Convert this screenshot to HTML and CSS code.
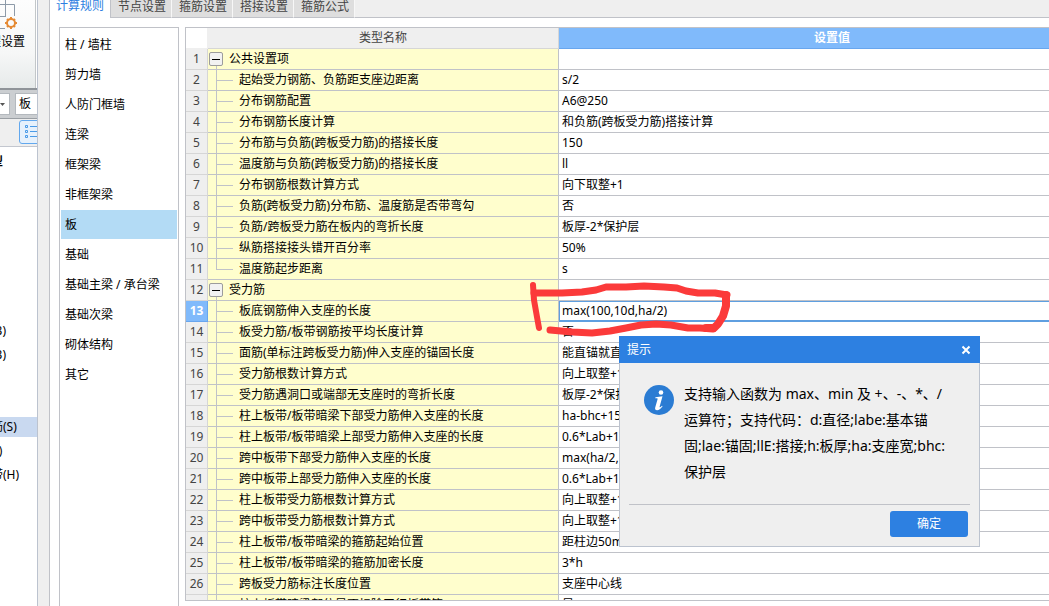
FILE: index.html
```html
<!DOCTYPE html>
<html lang="zh-CN">
<head>
<meta charset="utf-8">
<title>计算设置</title>
<link rel="stylesheet" href="styles.css">
</head>
<body>
<div class="app">
  <aside class="host">
    <div class="ribbon">
      <svg class="ribbon-icon" width="18" height="32" viewBox="0 0 18 32" fill="none" aria-hidden="true">
        <path d="M0 4.500H14.500V16M5.500 0V17M0 16.500H6M0 28.500H5" stroke="#8d9aa8"/>
        <circle cx="11" cy="23" r="4" stroke="#e58a33" stroke-width="2"/>
        <path d="M11 17v2M11 27v2M5 23h2M15 23h2M7 19l1.500 1.500M15 19l-1.500 1.500M7 27l1.500-1.500M15 27l-1.500-1.500" stroke="#e58a33" stroke-width="2"/>
      </svg>
      <button class="ribbon-label">工程设置</button>
    </div>
    <div class="combos">
      <button class="combo-arrow" aria-label="展开"><svg width="5" height="3" viewBox="0 0 5 3" aria-hidden="true"><path d="M0 0h5L2.500 3z" fill="#555"/></svg></button>
      <button class="combo">板</button>
    </div>
    <div class="tools">
      <button class="tool" aria-label="列表">
        <svg width="24" height="16" viewBox="0 0 24 16" fill="none" stroke="#4a9be8" aria-hidden="true">
          <path d="M.5 1.500h2v2h-2zM.5 6.500h2v2h-2zM.5 11.500h2v2h-2zM5 2.500h16M5 7.500h16M5 12.500h16"/>
        </svg>
      </button>
    </div>
    <ul class="tree">
      <li class="tree-title">构件类型</li>
      <li class="tree-gap"></li>
      <li>现浇板(B)</li>
      <li>螺旋板(B)</li>
      <li class="tree-space"></li>
      <li class="is-selected">板受力筋(S)</li>
      <li>板负筋(I)</li>
      <li>楼层板带(H)</li>
    </ul>
  </aside>
  <div class="gutter"></div>
  <main class="dialog">
    <nav class="tabs">
      <button class="tab is-active">计算规则</button>
      <button class="tab">节点设置</button>
      <button class="tab">箍筋设置</button>
      <button class="tab">搭接设置</button>
      <button class="tab">箍筋公式</button>
      <span class="tabs-rest"></span>
    </nav>
    <div class="content">
      <ul class="kinds">
        <li>柱 / 墙柱</li>
        <li>剪力墙</li>
        <li>人防门框墙</li>
        <li>连梁</li>
        <li>框架梁</li>
        <li>非框架梁</li>
        <li class="is-selected">板</li>
        <li>基础</li>
        <li>基础主梁 / 承台梁</li>
        <li>基础次梁</li>
        <li>砌体结构</li>
        <li>其它</li>
      </ul>
      <div class="sheet">
        <table class="grid">
          <colgroup><col class="col-no"><col class="col-name"><col></colgroup>
          <thead><tr><th class="corner"></th><th>类型名称</th><th class="is-current">设置值</th></tr></thead>
          <tbody>
            <tr><th>1</th><td class="group"><button class="toggle" aria-label="折叠"></button>公共设置项</td><td></td></tr>
            <tr><th>2</th><td class="item">起始受力钢筋、负筋距支座边距离</td><td>s/2</td></tr>
            <tr><th>3</th><td class="item">分布钢筋配置</td><td>A6@250</td></tr>
            <tr><th>4</th><td class="item">分布钢筋长度计算</td><td>和负筋(跨板受力筋)搭接计算</td></tr>
            <tr><th>5</th><td class="item">分布筋与负筋(跨板受力筋)的搭接长度</td><td>150</td></tr>
            <tr><th>6</th><td class="item">温度筋与负筋(跨板受力筋)的搭接长度</td><td>ll</td></tr>
            <tr><th>7</th><td class="item">分布钢筋根数计算方式</td><td>向下取整+1</td></tr>
            <tr><th>8</th><td class="item">负筋(跨板受力筋)分布筋、温度筋是否带弯勾</td><td>否</td></tr>
            <tr><th>9</th><td class="item">负筋/跨板受力筋在板内的弯折长度</td><td>板厚-2*保护层</td></tr>
            <tr><th>10</th><td class="item">纵筋搭接接头错开百分率</td><td>50%</td></tr>
            <tr><th>11</th><td class="item is-last">温度筋起步距离</td><td>s</td></tr>
            <tr><th>12</th><td class="group"><button class="toggle" aria-label="折叠"></button>受力筋</td><td></td></tr>
            <tr><th class="is-current">13</th><td class="item">板底钢筋伸入支座的长度</td><td class="editing"><input class="editor" aria-label="板底钢筋伸入支座的长度" value="max(100,10d,ha/2)"></td></tr>
            <tr><th>14</th><td class="item">板受力筋/板带钢筋按平均长度计算</td><td>否</td></tr>
            <tr><th>15</th><td class="item">面筋(单标注跨板受力筋)伸入支座的锚固长度</td><td>能直锚就直锚</td></tr>
            <tr><th>16</th><td class="item">受力筋根数计算方式</td><td>向上取整+1</td></tr>
            <tr><th>17</th><td class="item">受力筋遇洞口或端部无支座时的弯折长度</td><td>板厚-2*保护层</td></tr>
            <tr><th>18</th><td class="item">柱上板带/板带暗梁下部受力筋伸入支座的长度</td><td>ha-bhc+15*d</td></tr>
            <tr><th>19</th><td class="item">柱上板带/板带暗梁上部受力筋伸入支座的长度</td><td>0.6*Lab+15*d</td></tr>
            <tr><th>20</th><td class="item">跨中板带下部受力筋伸入支座的长度</td><td>max(ha/2,12*d)</td></tr>
            <tr><th>21</th><td class="item">跨中板带上部受力筋伸入支座的长度</td><td>0.6*Lab+15*d</td></tr>
            <tr><th>22</th><td class="item">柱上板带受力筋根数计算方式</td><td>向上取整+1</td></tr>
            <tr><th>23</th><td class="item">跨中板带受力筋根数计算方式</td><td>向上取整+1</td></tr>
            <tr><th>24</th><td class="item">柱上板带/板带暗梁的箍筋起始位置</td><td>距柱边50mm</td></tr>
            <tr><th>25</th><td class="item">柱上板带/板带暗梁的箍筋加密长度</td><td>3*h</td></tr>
            <tr><th>26</th><td class="item">跨板受力筋标注长度位置</td><td>支座中心线</td></tr>
            <tr><th></th><td class="item">柱上板带暗梁部位是否扣除平行板带筋</td><td>是</td></tr>
          </tbody>
        </table>
      </div>
    </div>
  </main>
</div>

<svg class="marker" width="206" height="60" viewBox="0 0 206 60" fill="none" stroke="#fb3a3a" stroke-linecap="round" stroke-linejoin="round" aria-hidden="true">
  <path stroke-width="6" d="M5 7L6 22 9 39 11 50"/>
  <path stroke-width="7" d="M6 15L34 15 54 14 68 12 78 9 98 9 116 8 136 9 149 10 158 13 170 15 187 15 199 17"/>
  <path stroke-width="8" d="M198 17L198 28 195 38 190 46 186 50 178 50"/>
  <path stroke-width="7" d="M185 51L172 50 160 50 143 47 128 46 113 47 98 50 82 53 64 55 44 54 22 52"/>
</svg>

<section class="prompt" role="dialog" aria-labelledby="prompt-title">
  <header class="prompt-head">
    <span id="prompt-title">提示</span>
    <button class="prompt-close" aria-label="关闭">
      <svg width="10" height="10" viewBox="0 0 10 10" stroke="#fff" stroke-width="2" aria-hidden="true"><path d="M1.500 1.500l7 7M8.500 1.500l-7 7"/></svg>
    </button>
  </header>
  <div class="prompt-body">
    <svg class="prompt-icon" width="30" height="30" viewBox="0 0 30 30" aria-hidden="true">
      <circle cx="15" cy="15" r="15" fill="#2b7cd3"/>
      <circle cx="17" cy="7.500" r="2.300" fill="#fff"/>
      <path fill="#fff" d="M11.500 12.200l7-.9-2.900 10.400c-.2.900.4 1 2.400-1l.6.6c-2 2.800-3.800 3.900-5.500 3.900-1.700 0-2.300-1-1.900-2.700l2.300-8c.2-.8 0-1.200-.8-1.200h-1.500z"/>
    </svg>
    <p class="prompt-text">支持输入函数为 max、min 及 +、-、*、/<br>运算符；支持代码：d:直径;labe:基本锚<br>固;lae:锚固;llE:搭接;h:板厚;ha:支座宽;bhc:<br>保护层</p>
  </div>
  <footer class="prompt-foot"><button class="prompt-ok">确定</button></footer>
</section>
</body>
</html>
```
FILE: styles.css
```css
* { box-sizing: border-box; }

html, body { height: 100%; }

body {
  margin: 0;
  overflow: hidden;
  background: #fff;
  color: #000;
  font: 12px/20px "Noto Sans", "Noto Sans CJK SC", sans-serif;
}

button, input { font: inherit; color: inherit; border: 0; padding: 0; margin: 0; background: none; }
ul { list-style: none; margin: 0; padding: 0; }

.app { display: flex; height: 100%; overflow: hidden; }

/* Host window, visible behind the dialog */
.host { flex: 0 0 38px; overflow: hidden; border-right: 1px solid #bcc3cf; }
.ribbon {
  height: 88px;
  margin-right: 1px;
  background: linear-gradient(#fdfdfd, #f6f7f7 60%, #e6eaea);
  border-right: 1px solid #c3c7c9;
}
.ribbon-icon { display: block; }
.ribbon-label { display: block; margin-left: -23px; white-space: nowrap; }
.combos {
  display: flex;
  gap: 5px;
  height: 31px;
  padding: 3px 0;
  background: #cbced1;
  border-top: 2px solid #8f9499;
  border-bottom: 1px solid #9a9fa4;
}
.combo-arrow { flex: 0 0 10px; display: flex; align-items: center; background: #fff; border: 1px solid #b4b9be; border-left: 0; }
.combo { flex: 1; padding-left: 3px; text-align: left; background: #fff; border: 1px solid #b4b9be; border-right: 0; }
.tools { height: 28px; padding: 1px 0 2px 19px; background: #efefef; border-bottom: 1px solid #c3c7cf; }
.tool { display: flex; align-items: center; width: 32px; height: 24px; padding-left: 5px; background: #e6f1fc; border: 1px solid #62a8ee; border-radius: 3px; }
.tree { padding-top: 5px; }
.tree li { height: 20px; margin-bottom: 4px; text-indent: -45px; white-space: nowrap; }
.tree .tree-title { font-weight: bold; }
.tree .tree-gap { height: 141px; }
.tree .tree-space { height: 44px; }
.tree .is-selected { background: #c9d9f0; }

.gutter { flex: 0 0 12px; background: #efefef; border-right: 1px solid #c0c2c8; }

/* Settings dialog */
.dialog { flex: 1; min-width: 0; display: flex; flex-direction: column; }
.tabs { display: flex; height: 18px; color: #444; }
.tab { flex: 0 0 61px; line-height: 14px; padding: 0 0 3px 2px; background: #dedede; border-right: 1px solid #f7f7f7; border-bottom: 1px solid #c0c2c8; }
.tab.is-active { color: #2d80e1; line-height: 12px; padding: 0 0 6px; background: #fff; border-right-color: #c0c2c8; border-bottom: 0; }
.tabs-rest { flex: 1; background: #efefef; border-bottom: 1px solid #c0c2c8; }

.content { flex: 1; min-height: 0; display: flex; gap: 6px; padding: 9px 0 0 9px; }
.kinds { flex: 0 0 120px; padding: 2px 1px; border: 1px solid #c0c2c8; border-bottom: 0; }
.kinds li { height: 29px; margin-bottom: 1px; padding-left: 4px; line-height: 30px; white-space: nowrap; }
.kinds .is-selected { background: #b3dbf5; }

.sheet { flex: 1; min-width: 0; margin: 0 -58px 5px 0; overflow: hidden; border: 1px solid #c0c2c8; }
.grid { width: 100%; table-layout: fixed; border-collapse: separate; border-spacing: 0; }
.col-no { width: 22px; }
.col-name { width: 351px; }
.grid th, .grid td { height: 21px; padding: 0; line-height: 20px; white-space: nowrap; border-right: 1px solid #c0c2c8; border-bottom: 1px solid #c0c2c8; }
.grid td { padding-left: 3px; }
.grid th { font-weight: normal; color: #444; background: #efefef; border-color: #d6d6d6; }
.grid thead .corner { background: #fff; border-color: #efefef; }
.grid .is-current, .grid thead .is-current { font-weight: bold; color: #fff; background: #80bafb; border-color: #68a6ee; }
.grid .group, .grid .item { background-color: #fffecd; background-repeat: no-repeat; }
.grid .group {
  padding-left: 1px;
  background-image: linear-gradient(#c0c2c8, #c0c2c8);
  background-size: 1px 10px;
  background-position: 8px 100%;
}
.grid .item {
  padding-left: 31px;
  background-image: linear-gradient(#c0c2c8, #c0c2c8), linear-gradient(#c0c2c8, #c0c2c8);
  background-size: 1px 100%, 16px 1px;
  background-position: 8px 0, 9px 10px;
}
.grid .item.is-last { background-size: 1px 11px, 16px 1px; }
.toggle {
  display: inline-flex;
  align-items: center;
  justify-content: center;
  width: 14px;
  height: 14px;
  margin: 3px 6px 0 0;
  vertical-align: top;
  background: #f2f2f2;
  border: 1px solid #9c9c9c;
  border-radius: 2px;
}
.toggle::after { content: ""; width: 8px; height: 1px; background: #000; }
.grid .editing { padding: 0; border-bottom-color: #5f9fe0; }
.editor { display: block; width: 100%; height: 20px; padding: 0 2px; border: solid #5f9fe0; border-width: 1px 0 1px 1px; outline: 0; }

/* Hand-drawn highlight over the edited cell */
.marker { position: absolute; left: 528px; top: 278px; pointer-events: none; }

/* Message box */
.prompt { position: absolute; left: 619px; top: 336px; width: 361px; background: #efefef; border: 1px solid #bcc3cf; border-top: 0; }
.prompt-head { display: flex; align-items: center; justify-content: space-between; height: 27px; margin: 0 -1px; padding: 0 9px 0 8px; color: #fff; background: #2d80e1; }
.prompt-close { display: flex; }
.prompt-body { display: flex; align-items: flex-start; gap: 10px; padding: 18px 24px 19px; }
.prompt-icon { flex: none; margin-top: 4px; }
.prompt-text { margin: 0; font-size: 14px; line-height: 26px; white-space: nowrap; }
.prompt-foot { display: flex; justify-content: flex-end; margin: 0 9px; padding: 6px 2px 9px; border-top: 1px solid #c0c2c8; }
.prompt-ok { width: 78px; height: 26px; color: #fff; background: #2d80e1; border-radius: 3px; }
```
